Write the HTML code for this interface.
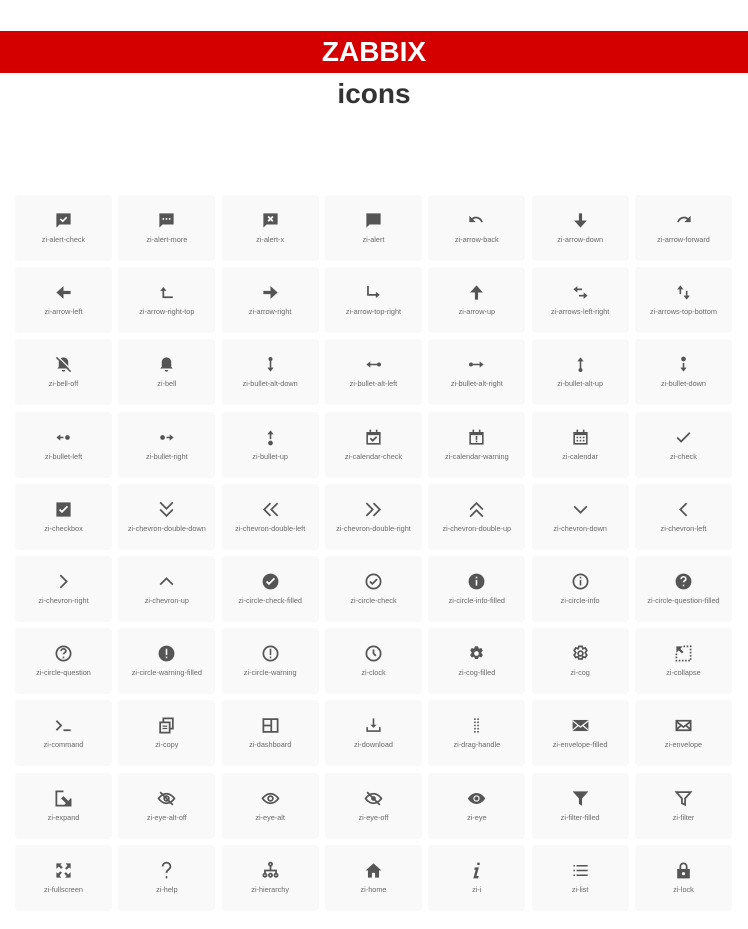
<!DOCTYPE html>
<html><head><meta charset="utf-8"><style>
body{margin:0;background:#fff;font-family:"Liberation Sans",sans-serif;width:748px;height:929px;overflow:hidden;position:relative}
.bar{position:absolute;top:31px;left:0;width:748px;height:42px;background:#d40000;color:#fff;font-weight:bold;font-size:28px;text-align:center;line-height:42px}
h1{position:absolute;top:76px;left:0;width:748px;margin:0;text-align:center;font-size:28px;color:#333;line-height:36px}
.grid{position:absolute;left:15px;top:195px;display:grid;grid-template-columns:repeat(7,97px);column-gap:6.33px;row-gap:6.2px}
.c{width:97px;height:66px;background:#f9f9f9;border-radius:4px;position:relative}
.c svg{position:absolute;left:39px;top:16px;width:19px;height:19px;fill:#555;stroke:none}
.c span{position:absolute;left:0;right:0;top:40px;text-align:center;font-size:7.3px;color:#6a6a6a;white-space:nowrap}
.s{fill:none!important;stroke:#555;stroke-width:2.2}
</style></head><body>
<div class="bar">ZABBIX</div>
<h1>icons</h1>
<div class="grid">
<div class="c"><svg viewBox="0 0 24 24"><path d="M3 3h18v14H7l-4 4z"/><path d="M8 10l3 3 5-5" stroke="#fff" stroke-width="2" fill="none"/></svg><span>zi-alert-check</span></div>
<div class="c"><svg viewBox="0 0 24 24"><path d="M3 3h18v14H7l-4 4z"/><path d="M7 9h2v2H7zM11 9h2v2h-2zM15 9h2v2h-2z" fill="#fff"/></svg><span>zi-alert-more</span></div>
<div class="c"><svg viewBox="0 0 24 24"><path d="M3 3h18v14H7l-4 4z"/><path d="M9 7l6 6M15 7l-6 6" stroke="#fff" stroke-width="2.2"/></svg><span>zi-alert-x</span></div>
<div class="c"><svg viewBox="0 0 24 24"><path d="M3 3h18v14H7l-4 4z"/></svg><span>zi-alert</span></div>
<div class="c"><svg viewBox="0 0 24 24"><path class="s" d="M6 11c3-4 10-4 13 3"/><path d="M3 6v8h8z"/></svg><span>zi-arrow-back</span></div>
<div class="c"><svg viewBox="0 0 24 24"><path d="M10 3h4v9h6l-8 9-8-9h6z"/></svg><span>zi-arrow-down</span></div>
<div class="c"><svg viewBox="0 0 24 24"><path class="s" d="M18 11c-3-4-10-4-13 3"/><path d="M21 6v8h-8z"/></svg><span>zi-arrow-forward</span></div>
<div class="c"><svg viewBox="0 0 24 24"><path d="M21 10v4h-9v6l-9-8 9-8v6z"/></svg><span>zi-arrow-left</span></div>
<div class="c"><svg viewBox="0 0 24 24"><path class="s" d="M8 8v10h12" stroke-width="1.8"/><path d="M4 10l4-5 4 5z"/></svg><span>zi-arrow-right-top</span></div>
<div class="c"><svg viewBox="0 0 24 24"><path d="M3 10v4h9v6l9-8-9-8v6z"/></svg><span>zi-arrow-right</span></div>
<div class="c"><svg viewBox="0 0 24 24"><path class="s" d="M5 4v11h12" stroke-width="1.8"/><path d="M15 11l5 4-5 4z"/></svg><span>zi-arrow-top-right</span></div>
<div class="c"><svg viewBox="0 0 24 24"><path d="M10 21h4v-9h6l-8-9-8 9h6z"/></svg><span>zi-arrow-up</span></div>
<div class="c"><svg viewBox="0 0 24 24"><path d="M8 4l-5 4 5 4V9h6V7H8zM16 12l5 4-5 4v-3h-6v-2h6z"/></svg><span>zi-arrows-left-right</span></div>
<div class="c"><svg viewBox="0 0 24 24"><path d="M8 3l-4 5h3v6h2V8h3zM16 21l4-5h-3v-6h-2v6h-3z"/></svg><span>zi-arrows-top-bottom</span></div>
<div class="c"><svg viewBox="0 0 24 24"><path d="M12 3a6 6 0 016 6v6l2 2H4l2-2V9a6 6 0 016-6zM10 19h4a2 2 0 01-4 0z"/><path d="M3 3l18 18" stroke="#555" stroke-width="2"/><path d="M5 2l17 17" stroke="#f9f9f9" stroke-width="1.5"/></svg><span>zi-bell-off</span></div>
<div class="c"><svg viewBox="0 0 24 24"><path d="M12 3a6 6 0 016 6v6l2 2H4l2-2V9a6 6 0 016-6zM10 19h4a2 2 0 01-4 0z"/></svg><span>zi-bell</span></div>
<div class="c"><svg viewBox="0 0 24 24"><circle cx="12" cy="5" r="2.5"/><path d="M11 6h2v10h3l-4 5-4-5h3z"/></svg><span>zi-bullet-alt-down</span></div>
<div class="c"><svg viewBox="0 0 24 24"><circle cx="19" cy="12" r="2.5"/><path d="M18 11v2H8v3l-5-4 5-4v3z"/></svg><span>zi-bullet-alt-left</span></div>
<div class="c"><svg viewBox="0 0 24 24"><circle cx="5" cy="12" r="2.5"/><path d="M6 11v2h10v3l5-4-5-4v3z"/></svg><span>zi-bullet-alt-right</span></div>
<div class="c"><svg viewBox="0 0 24 24"><circle cx="12" cy="19" r="2.5"/><path d="M11 18h2V8h3l-4-5-4 5h3z"/></svg><span>zi-bullet-alt-up</span></div>
<div class="c"><svg viewBox="0 0 24 24"><circle cx="12" cy="5" r="3"/><path d="M11 10h2v6h3l-4 5-4-5h3z"/></svg><span>zi-bullet-down</span></div>
<div class="c"><svg viewBox="0 0 24 24"><circle cx="17" cy="12" r="3"/><path d="M12 11v2H8v3l-5-4 5-4v3z"/></svg><span>zi-bullet-left</span></div>
<div class="c"><svg viewBox="0 0 24 24"><circle cx="7" cy="12" r="3"/><path d="M12 11v2h4v3l5-4-5-4v3z"/></svg><span>zi-bullet-right</span></div>
<div class="c"><svg viewBox="0 0 24 24"><circle cx="12" cy="19" r="3"/><path d="M11 14h2V8h3l-4-5-4 5h3z"/></svg><span>zi-bullet-up</span></div>
<div class="c"><svg viewBox="0 0 24 24"><path d="M3 5h18v16H3zM5 9v10h14V9zM7 2h2v4H7zM15 2h2v4h-2z"/><path d="M8 13l3 3 5-5" class="s" stroke-width="1.8"/></svg><span>zi-calendar-check</span></div>
<div class="c"><svg viewBox="0 0 24 24"><path d="M3 5h18v16H3zM5 9v10h14V9zM7 2h2v4H7zM15 2h2v4h-2zM11 10h2v5h-2zM11 16h2v2h-2z"/></svg><span>zi-calendar-warning</span></div>
<div class="c"><svg viewBox="0 0 24 24"><path d="M3 5h18v16H3zM5 9v10h14V9zM7 2h2v4H7zM15 2h2v4h-2zM7 11h2v2H7zM11 11h2v2h-2zM15 11h2v2h-2zM7 15h2v2H7zM11 15h2v2h-2zM15 15h2v2h-2z"/></svg><span>zi-calendar</span></div>
<div class="c"><svg viewBox="0 0 24 24"><path class="s" d="M4 12l5 5L20 6" stroke-width="2.5"/></svg><span>zi-check</span></div>
<div class="c"><svg viewBox="0 0 24 24"><path d="M3 3h18v18H3z"/><path d="M7 12l3 3 7-7" stroke="#fff" stroke-width="2.2" fill="none"/></svg><span>zi-checkbox</span></div>
<div class="c"><svg viewBox="0 0 24 24"><path class="s" d="M4 3l8 8 8-8M4 12l8 8 8-8" stroke-width="3.5"/></svg><span>zi-chevron-double-down</span></div>
<div class="c"><svg viewBox="0 0 24 24"><path class="s" d="M12 4l-8 8 8 8M21 4l-8 8 8 8" stroke-width="3.5"/></svg><span>zi-chevron-double-left</span></div>
<div class="c"><svg viewBox="0 0 24 24"><path class="s" d="M3 4l8 8-8 8M12 4l8 8-8 8" stroke-width="3.5"/></svg><span>zi-chevron-double-right</span></div>
<div class="c"><svg viewBox="0 0 24 24"><path class="s" d="M4 12l8-8 8 8M4 21l8-8 8 8" stroke-width="3.5"/></svg><span>zi-chevron-double-up</span></div>
<div class="c"><svg viewBox="0 0 24 24"><path class="s" d="M4 8l8 8 8-8" stroke-width="3"/></svg><span>zi-chevron-down</span></div>
<div class="c"><svg viewBox="0 0 24 24"><path class="s" d="M16 4l-8 8 8 8" stroke-width="3"/></svg><span>zi-chevron-left</span></div>
<div class="c"><svg viewBox="0 0 24 24"><path class="s" d="M8 4l8 8-8 8" stroke-width="3"/></svg><span>zi-chevron-right</span></div>
<div class="c"><svg viewBox="0 0 24 24"><path class="s" d="M4 16l8-8 8 8" stroke-width="3"/></svg><span>zi-chevron-up</span></div>
<div class="c"><svg viewBox="0 0 24 24"><circle cx="12" cy="12" r="10"/><path d="M7 12l3 3 7-7" stroke="#fff" stroke-width="2.2" fill="none"/></svg><span>zi-circle-check-filled</span></div>
<div class="c"><svg viewBox="0 0 24 24"><circle class="s" cx="12" cy="12" r="9" stroke-width="2"/><path class="s" d="M7.5 12l3 3 6-6" stroke-width="2"/></svg><span>zi-circle-check</span></div>
<div class="c"><svg viewBox="0 0 24 24"><circle cx="12" cy="12" r="10"/><path d="M11 10h2v7h-2zM11 6h2v2h-2z" fill="#fff"/></svg><span>zi-circle-info-filled</span></div>
<div class="c"><svg viewBox="0 0 24 24"><circle class="s" cx="12" cy="12" r="9" stroke-width="2"/><path d="M11 10h2v7h-2zM11 6h2v2h-2z"/></svg><span>zi-circle-info</span></div>
<div class="c"><svg viewBox="0 0 24 24"><circle cx="12" cy="12" r="10"/><path d="M9 9a3 3 0 116 0c0 2-3 2-3 4" stroke="#fff" stroke-width="2" fill="none"/><path d="M11 16h2v2h-2z" fill="#fff"/></svg><span>zi-circle-question-filled</span></div>
<div class="c"><svg viewBox="0 0 24 24"><circle class="s" cx="12" cy="12" r="9" stroke-width="2"/><path class="s" d="M9 9a3 3 0 116 0c0 2-3 2-3 4" stroke-width="2"/><path d="M11 16h2v2h-2z"/></svg><span>zi-circle-question</span></div>
<div class="c"><svg viewBox="0 0 24 24"><circle cx="12" cy="12" r="10"/><path d="M11 6h2v8h-2zM11 16h2v2h-2z" fill="#fff"/></svg><span>zi-circle-warning-filled</span></div>
<div class="c"><svg viewBox="0 0 24 24"><circle class="s" cx="12" cy="12" r="9" stroke-width="2"/><path d="M11 6h2v8h-2zM11 16h2v2h-2z"/></svg><span>zi-circle-warning</span></div>
<div class="c"><svg viewBox="0 0 24 24"><circle class="s" cx="12" cy="12" r="9" stroke-width="2"/><path class="s" d="M12 7v5l3 3" stroke-width="2"/></svg><span>zi-clock</span></div>
<div class="c"><svg viewBox="0 0 24 24"><path d="M10 2h4l1 3 3-1 2 3-2 3 2 3-2 3-3-1-1 3h-4l-1-3-3 1-2-3 2-3-2-3 2-3 3 1z" transform="translate(0 1)"/><circle cx="12" cy="12" r="3" fill="#f9f9f9"/></svg><span>zi-cog-filled</span></div>
<div class="c"><svg viewBox="0 0 24 24"><path class="s" stroke-width="1.6" d="M10 3h4l1 3 3-1 2 3-2 3 2 3-2 3-3-1-1 3h-4l-1-3-3 1-2-3 2-3-2-3 2-3 3 1z"/><circle class="s" stroke-width="1.6" cx="12" cy="12" r="3"/></svg><span>zi-cog</span></div>
<div class="c"><svg viewBox="0 0 24 24"><path class="s" stroke-width="1.6" stroke-dasharray="2 2" d="M12 3h9v18H3v-9"/><path d="M3 3h8l-3 3 4 4-2 2-4-4-3 3z"/></svg><span>zi-collapse</span></div>
<div class="c"><svg viewBox="0 0 24 24"><path class="s" d="M3 6l6 6-6 6M12 18h9" stroke-width="2"/></svg><span>zi-command</span></div>
<div class="c"><svg viewBox="0 0 24 24"><path class="s" stroke-width="2" d="M8 7V3h12v13h-4M4 8h12v13H4z"/><path d="M7 12h6v1.5H7zM7 15h6v1.5H7z"/></svg><span>zi-copy</span></div>
<div class="c"><svg viewBox="0 0 24 24"><path class="s" stroke-width="1.8" d="M3 4h18v16H3zM3 12h10M13 4v16"/></svg><span>zi-dashboard</span></div>
<div class="c"><svg viewBox="0 0 24 24"><path d="M11 3h2v8h3l-4 4-4-4h3zM3 14h2v4h14v-4h2v6H3z"/></svg><span>zi-download</span></div>
<div class="c"><svg viewBox="0 0 24 24"><path d="M9 3h2v2H9zM13 3h2v2h-2zM9 7h2v2H9zM13 7h2v2h-2zM9 11h2v2H9zM13 11h2v2h-2zM9 15h2v2H9zM13 15h2v2h-2zM9 19h2v2H9zM13 19h2v2h-2z"/></svg><span>zi-drag-handle</span></div>
<div class="c"><svg viewBox="0 0 24 24"><path d="M2 5h20v14H2z"/><path d="M2 6l10 8 10-8M2 18l7-6M22 18l-7-6" stroke="#f9f9f9" stroke-width="1.6" fill="none"/></svg><span>zi-envelope-filled</span></div>
<div class="c"><svg viewBox="0 0 24 24"><path class="s" stroke-width="1.8" d="M3 6h18v12H3zM3 7l9 7 9-7M3 17l6-5M21 17l-6-5"/></svg><span>zi-envelope</span></div>
<div class="c"><svg viewBox="0 0 24 24"><path class="s" stroke-width="2" d="M12 3H3v18h18v-9"/><path d="M21 21h-9l3-3-6-6 3-3 6 6 3-3z"/></svg><span>zi-expand</span></div>
<div class="c"><svg viewBox="0 0 24 24"><path class="s" stroke-width="1.6" d="M2 12s4-6 10-6 10 6 10 6-4 6-10 6S2 12 2 12zM4 4l16 16"/><circle class="s" stroke-width="1.6" cx="12" cy="12" r="3"/></svg><span>zi-eye-alt-off</span></div>
<div class="c"><svg viewBox="0 0 24 24"><path class="s" stroke-width="1.8" d="M2 12s4-6 10-6 10 6 10 6-4 6-10 6S2 12 2 12z"/><circle class="s" stroke-width="1.8" cx="12" cy="12" r="3"/></svg><span>zi-eye-alt</span></div>
<div class="c"><svg viewBox="0 0 24 24"><path class="s" stroke-width="2" d="M2 12s4-6 10-6 10 6 10 6-4 6-10 6S2 12 2 12zM4 4l16 16"/><circle cx="12" cy="12" r="3"/></svg><span>zi-eye-off</span></div>
<div class="c"><svg viewBox="0 0 24 24"><path d="M1 12s4-7 11-7 11 7 11 7-4 7-11 7S1 12 1 12z"/><circle cx="12" cy="12" r="4" fill="#f9f9f9"/><circle cx="12" cy="12" r="2.5"/></svg><span>zi-eye</span></div>
<div class="c"><svg viewBox="0 0 24 24"><path d="M2 3h20l-8 9v9l-4-2v-7z"/></svg><span>zi-filter-filled</span></div>
<div class="c"><svg viewBox="0 0 24 24"><path class="s" stroke-width="1.8" d="M3 4h18l-7 8v8l-4-2v-6z"/></svg><span>zi-filter</span></div>
<div class="c"><svg viewBox="0 0 24 24"><path d="M3 3h7L8 5l3 3-2 2-3-3-3 3zM21 3v7l-2-2-3 3-2-2 3-3-2-3zM3 21v-7l2 2 3-3 2 2-3 3 2 3zM21 21h-7l2-2-3-3 2-2 3 3 3-3z"/></svg><span>zi-fullscreen</span></div>
<div class="c"><svg viewBox="0 0 24 24"><path class="s" stroke-width="2" d="M7 7a5 5 0 1110 0c0 4-5 4-5 8"/><path d="M11 19h2v3h-2z"/></svg><span>zi-help</span></div>
<div class="c"><svg viewBox="0 0 24 24"><path class="s" stroke-width="1.6" d="M12 6v5M5 16v-4h14v4"/><circle class="s" stroke-width="1.6" cx="12" cy="4" r="2"/><circle class="s" stroke-width="1.6" cx="5" cy="18" r="2"/><circle class="s" stroke-width="1.6" cx="12" cy="18" r="2"/><circle class="s" stroke-width="1.6" cx="19" cy="18" r="2"/></svg><span>zi-hierarchy</span></div>
<div class="c"><svg viewBox="0 0 24 24"><path d="M12 3l10 9h-3v9h-5v-6h-4v6H5v-9H2z"/></svg><span>zi-home</span></div>
<div class="c"><svg viewBox="0 0 24 24"><path d="M13 2h3v3h-3zM10 8h5l-3 11h3l-1 3H8l3-11H9z"/></svg><span>zi-i</span></div>
<div class="c"><svg viewBox="0 0 24 24"><path d="M3 5h2v2H3zM7 5h14v2H7zM3 11h2v2H3zM7 11h14v2H7zM3 17h2v2H3zM7 17h14v2H7z"/></svg><span>zi-list</span></div>
<div class="c"><svg viewBox="0 0 24 24"><path class="s" stroke-width="2.2" d="M8 11V7a4 4 0 018 0v4"/><path d="M4 10h16v12H4z"/><circle cx="12" cy="16" r="2" fill="#f9f9f9"/></svg><span>zi-lock</span></div>
</div>
</body></html>
